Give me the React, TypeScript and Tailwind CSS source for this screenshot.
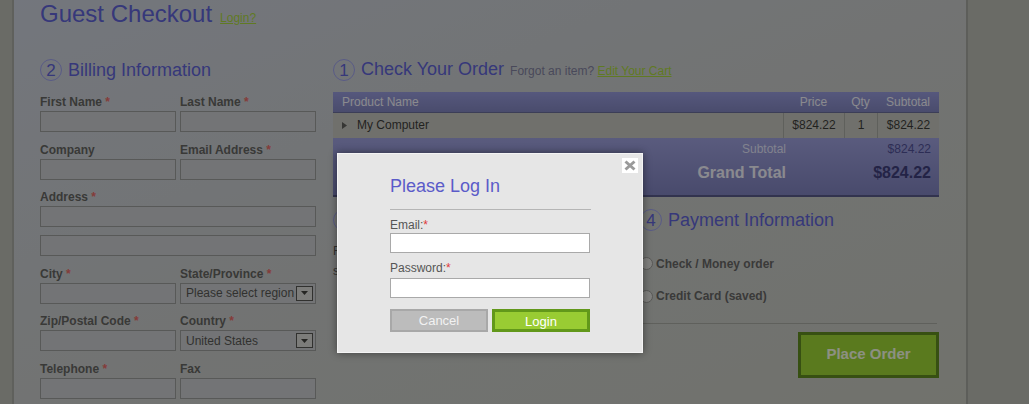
import React from "react";

const labelCls = "block h-4 text-[12px] font-bold leading-4 text-[#4a4a4a]";
const inputCls = "block h-[21px] w-full border border-[#888a8c] bg-[#bec1c8]";

function Req() {
  return <span className="text-[#e05050]"> *</span>;
}

function Heading({ n, title, extra }: { n: number; title: string; extra?: React.ReactNode }) {
  return (
    <div className="flex h-[22px] items-center">
      <span className="flex h-[22px] w-[22px] shrink-0 items-center justify-center rounded-full border-[1.5px] border-[#8a8ee8] text-[17px] leading-none text-[#4448d0]">
        {n}
      </span>
      <h2 className="ml-[6px] whitespace-nowrap text-[18px] leading-[22px] text-[#4448d0]">
        {title}
        {extra}
      </h2>
    </div>
  );
}

function Field({
  label,
  req,
  full,
  children,
}: {
  label: string;
  req?: boolean;
  full?: boolean;
  children?: React.ReactNode;
}) {
  return (
    <div className={full ? "col-span-2" : ""}>
      <label className={labelCls}>
        {label}
        {req && <Req />}
      </label>
      <div className="mt-px">{children ?? <input className={inputCls} />}</div>
    </div>
  );
}

function Select({ value }: { value: string }) {
  return (
    <div className="flex h-[21px] w-full items-center border border-[#888a8c] bg-[#bec1c8] pr-[2px]">
      <span className="flex-1 overflow-hidden whitespace-nowrap pl-[5px] text-[12px] text-[#3a3a3a]">
        {value}
      </span>
      <span className="flex h-[15px] w-[17px] shrink-0 items-center justify-center border border-[#3a3a3a] bg-[#d0d0d0]">
        <svg width="7" height="4" viewBox="0 0 7 4">
          <path d="M0 0h7L3.5 4z" fill="#222" />
        </svg>
      </span>
    </div>
  );
}

function Billing() {
  return (
    <div className="w-[276px] shrink-0">
      <Heading n={2} title="Billing Information" />
      <div className="mt-[13px] grid grid-cols-2 gap-x-[4px] gap-y-[9.5px]">
        <Field label="First Name" req />
        <Field label="Last Name" req />
        <Field label="Company" />
        <Field label="Email Address" req />
        <Field label="Address" req full>
          <input className={inputCls} />
          <input className={inputCls + " mt-[8px]"} />
        </Field>
        <Field label="City" req />
        <Field label="State/Province" req>
          <Select value="Please select region" />
        </Field>
        <Field label="Zip/Postal Code" req />
        <Field label="Country" req>
          <Select value="United States" />
        </Field>
        <Field label="Telephone" req />
        <Field label="Fax" />
      </div>
    </div>
  );
}

function OrderTable() {
  return (
    <div className="mt-[11px] w-[606px] text-[12px]">
      <div className="grid h-[21px] grid-cols-[1fr_61px_33px_62px] border-b border-[#50548a] bg-gradient-to-b from-[#8488d6] to-[#6c70b6] leading-[20px] text-[#ececf8]">
        <span className="pl-[9px]">Product Name</span>
        <span className="text-center">Price</span>
        <span className="text-center">Qty</span>
        <span className="text-center">Subtotal</span>
      </div>
      <div className="grid h-[25px] grid-cols-[1fr_61px_33px_62px] bg-[#b8b8b5] leading-[25px] text-[#1a1a1a]">
        <span className="flex items-center pl-[9px]">
          <svg width="5" height="7" viewBox="0 0 5 7" className="mr-[10px]">
            <path d="M0 0l5 3.5L0 7z" fill="#444" />
          </svg>
          My Computer
        </span>
        <span className="border-l border-[#969895] text-center">$824.22</span>
        <span className="border-l border-[#969895] text-center">1</span>
        <span className="border-l border-[#969895] text-center">$824.22</span>
      </div>
      <div className="h-[59px] border-b-2 border-[#3c3e78] bg-gradient-to-b from-[#8c8fd8] to-[#6a6db5]">
        <div className="flex h-[21px] items-center">
          <span className="w-[453px] text-right text-[#dcdef8]">Subtotal</span>
          <span className="flex-1 pr-[8px] text-right text-[#323287]">$824.22</span>
        </div>
        <div className="flex h-[28px] items-center">
          <span className="w-[453px] text-right text-[16px] font-bold text-[#ececfa]">Grand Total</span>
          <span className="flex-1 pr-[8px] text-right text-[16px] font-bold text-[#1e1e69]">$824.22</span>
        </div>
      </div>
    </div>
  );
}

function Radio({ label }: { label: string }) {
  return (
    <div className="flex h-[20px] items-center">
      <span className="h-[13px] w-[13px] shrink-0 rounded-full border border-[#8a8a8a] bg-[#d8d8d8]" />
      <span className="ml-[3px] text-[12px] font-bold text-[#4c4c4f]">{label}</span>
    </div>
  );
}

function LoginModal() {
  return (
    <div className="absolute left-[337px] top-[153px] w-[306px] border border-[#f4f4f4] bg-[#e6e6e6] pb-[20px] pl-[52px] pt-[21px] shadow-[0_0_8px_rgba(0,0,0,0.45)]">
      <button className="absolute right-[4px] top-[4px] flex h-[15px] w-[16px] items-center justify-center bg-white">
        <svg width="12" height="11" viewBox="0 0 12 11">
          <path d="M1.5 1.5l9 8M10.5 1.5l-9 8" stroke="#9a9a9a" strokeWidth="3" />
        </svg>
      </button>
      <h3 className="text-[18px] leading-[22px] text-[#5b5bc9]">Please Log In</h3>
      <div className="mt-[12px] w-[201px] border-t border-[#b5b5b5]" />
      <label className="mt-[7px] block h-4 text-[12px] leading-4 text-[#555]">
        Email:<span className="text-[#e03a3a]">*</span>
      </label>
      <input className="block h-[20px] w-[200px] border border-[#a9a9a9] bg-white" />
      <label className="mt-[7px] block h-4 text-[12px] leading-4 text-[#555]">
        Password:<span className="text-[#e03a3a]">*</span>
      </label>
      <input type="password" className="mt-[2px] block h-[20px] w-[200px] border border-[#a9a9a9] bg-white" />
      <div className="mt-[11px] flex gap-[4px]">
        <button className="h-[23px] w-[98px] border-2 border-[#a8a8a8] bg-[#bcbcbc] text-[13px] text-[#f2f2f2]">
          Cancel
        </button>
        <button className="h-[23px] w-[98px] border-[3px] border-[#62981a] bg-[#99cc33] text-[13px] text-white">
          Login
        </button>
      </div>
    </div>
  );
}

export default function App() {
  return (
    <div className="relative h-[404px] w-[1029px] overflow-hidden bg-[#acaea9] font-['Liberation_Sans',Arial,sans-serif]">
      <div className="flex h-full">
        <div className="w-[12px] shrink-0" />
        <main className="h-full w-[956px] shrink-0 border-l-2 border-r-2 border-l-[#969895] border-r-[#929490] bg-gradient-to-br from-[#bfc5d6] via-[#bcbfc2] to-[#babcb5] pl-[26px]">
          <div className="flex h-[28px] items-baseline">
            <h1 className="text-[24px] leading-[28px] text-[#4448d0]">Guest Checkout</h1>
            <a className="ml-[8px] text-[12px] text-[#99cc22] underline">Login?</a>
          </div>
          <div className="mt-[31px] flex gap-[17px]">
            <Billing />
            <div className="w-[606px] shrink-0">
              <Heading
                n={1}
                title="Check Your Order"
                extra={
                  <span className="ml-[6px] text-[12px] text-[#6a6a90]">
                    Forgot an item? <a className="text-[#99cc22] underline">Edit Your Cart</a>
                  </span>
                }
              />
              <OrderTable />
              <div className="mt-[12px] flex gap-[10px]">
                <div className="w-[297px] shrink-0">
                  <Heading n={3} title="Shipping Method" />
                  <div className="mt-[10px] text-[12px] leading-[20px] text-[#3a3a3a]">
                    <p>Flat Rate</p>
                    <p>shipping</p>
                  </div>
                </div>
                <div className="w-[299px] shrink-0">
                  <Heading n={4} title="Payment Information" />
                  <div className="mt-[22.5px] flex flex-col gap-[12.5px]">
                    <Radio label="Check / Money order" />
                    <Radio label="Credit Card (saved)" />
                  </div>
                  <div className="mt-[16.5px] w-[297px] border-t border-[#969895]" />
                  <div className="mt-[8px] flex justify-end">
                    <button className="h-[46px] w-[141px] border-[3px] border-[#467800] bg-[#8ccc19] text-[15px] font-bold text-[#f0f8e0]">
                      Place Order
                    </button>
                  </div>
                </div>
              </div>
            </div>
          </div>
        </main>
      </div>
      <div className="absolute inset-0 bg-[rgba(40,40,35,0.5)]" />
      <LoginModal />
    </div>
  );
}
